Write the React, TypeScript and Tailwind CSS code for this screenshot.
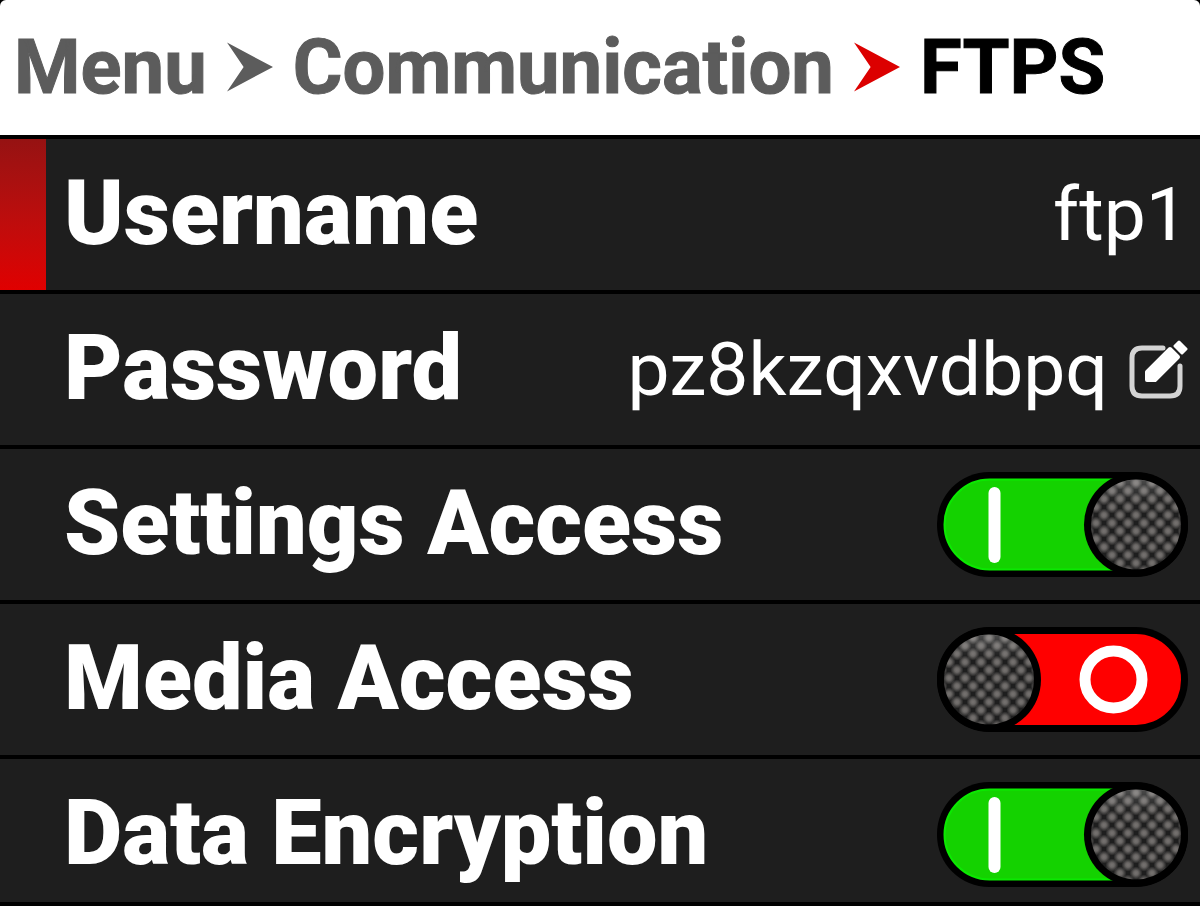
import { useState, type ReactNode } from "react";

const Arrow = ({ className }: { className: string }) => (
  <svg viewBox="0 0 47 50" className={`h-[50px] w-[46px] shrink-0 ${className}`} aria-hidden="true">
    <path d="M0 0 L47 25 L0 50 L17 25 Z" fill="currentColor" />
  </svg>
);

const EditIcon = () => (
  <svg viewBox="0 0 60 62" className="h-[62px] w-[60px]" fill="none" aria-hidden="true">
    <path
      d="M35 9 H14 Q4 9 4 19 V47 Q4 57 14 57 H42 Q52 57 52 47 V27"
      stroke="#d4d4d4"
      strokeWidth="5"
      strokeLinecap="round"
    />
    <path d="M19 41 V33 L42 10 L50 18 L27 41 Z" fill="#fff" stroke="#fff" strokeWidth="4" strokeLinejoin="round" />
    <path d="M47 7 L51 3 L58 10 L54 14 Z" fill="#fff" stroke="#fff" strokeWidth="3" strokeLinejoin="round" />
  </svg>
);

interface ToggleProps {
  id: string;
  checked: boolean;
  onChange: (checked: boolean) => void;
}

const Toggle = ({ id, checked, onChange }: ToggleProps) => {
  const knobX = checked ? 199 : 52;

  return (
    <span className="relative mr-3 block h-[105px] w-[251px] shrink-0">
      <svg viewBox="0 0 251 105" className="h-full w-full" aria-hidden="true">
        <defs>
          <radialGradient id={`${id}-dot`}>
            <stop offset="0" stopColor="#777371" />
            <stop offset="0.35" stopColor="#6a6765" />
            <stop offset="1" stopColor="#6a6765" stopOpacity="0" />
          </radialGradient>
          <pattern id={`${id}-grip`} x={knobX - 8} y="3" width="16" height="16" patternUnits="userSpaceOnUse">
            <rect width="16" height="16" fill="#1e1e1e" />
            <circle cx="8" cy="8" r="6.5" fill={`url(#${id}-dot)`} />
            <circle cx="0" cy="0" r="6.5" fill={`url(#${id}-dot)`} />
            <circle cx="16" cy="0" r="6.5" fill={`url(#${id}-dot)`} />
            <circle cx="0" cy="16" r="6.5" fill={`url(#${id}-dot)`} />
            <circle cx="16" cy="16" r="6.5" fill={`url(#${id}-dot)`} />
          </pattern>
          <linearGradient id={`${id}-shine`} x1="0" y1="0" x2="0" y2="1">
            <stop offset="0" stopColor="#fff" stopOpacity="0.2" />
            <stop offset="0.25" stopColor="#fff" stopOpacity="0" />
          </linearGradient>
        </defs>
        <rect width="251" height="105" rx="52" fill="#000" />
        {checked ? (
          <>
            <rect x="7.5" y="7.5" width="236" height="90" rx="45" fill="#14d200" stroke="#0be900" strokeWidth="2" />
            <rect x="51.5" y="15" width="12" height="76" rx="6" fill="#fff" />
          </>
        ) : (
          <>
            <rect x="7" y="7" width="237" height="91" rx="45" fill="#f00" />
            <circle cx="176.5" cy="52.5" r="28.5" stroke="#fff" strokeWidth="11" fill="none" />
          </>
        )}
        <circle cx={knobX} cy="52.5" r="52" fill="#000" />
        <circle cx={knobX} cy="52.5" r="45" fill={`url(#${id}-grip)`} />
        <circle cx={knobX} cy="52.5" r="45" fill={`url(#${id}-shine)`} />
      </svg>
      <input
        id={id}
        type="checkbox"
        role="switch"
        checked={checked}
        onChange={(e) => onChange(e.target.checked)}
        className="absolute inset-0 h-full w-full cursor-pointer opacity-0"
      />
    </span>
  );
};

interface RowProps {
  label: ReactNode;
  selected?: boolean;
  children: ReactNode;
}

const Row = ({ label, selected, children }: RowProps) => (
  <li className="flex h-[155px] shrink-0 items-stretch border-b-4 border-black bg-[#1e1e1e]">
    <span className={`mr-[18px] w-[46px] shrink-0 ${selected ? "bg-linear-to-b from-[#961212] to-[#e00000]" : ""}`} />
    <div className="flex flex-1 items-center justify-between">
      <span className="pb-0.5 text-[90px] leading-none font-black whitespace-nowrap">{label}</span>
      {children}
    </div>
  </li>
);

const switches = [
  { id: "settings-access", label: "Settings Access", on: true },
  { id: "media-access", label: "Media Access", on: false },
  { id: "data-encryption", label: "Data Encryption", on: true },
];

const App = () => {
  const [state, setState] = useState<Record<string, boolean>>(
    Object.fromEntries(switches.map((s) => [s.id, s.on]))
  );

  return (
    <div className="flex h-screen flex-col bg-black font-['Roboto',sans-serif] text-white">
      <header className="rounded-t-md bg-white px-3.5 pt-[27px] pb-7">
        <nav className="flex items-center gap-5 text-[76px] leading-[80px] font-bold whitespace-nowrap text-[#5c5c5c] [-webkit-text-stroke:1px]">
          <a href="#menu">Menu</a>
          <Arrow className="text-[#5c5c5c]" />
          <a href="#communication">Communication</a>
          <Arrow className="text-[#dc0000]" />
          <span className="text-black">FTPS</span>
        </nav>
      </header>

      <ul className="flex min-h-0 flex-1 flex-col overflow-hidden border-t-4 border-black">
        <Row label="Username" selected>
          <span className="mr-3 text-[75px] leading-none">ftp1</span>
        </Row>
        <Row label="Password">
          <span className="mr-3 flex items-center gap-5">
            <span className="text-[75px] leading-none">pz8kzqxvdbpq</span>
            <button type="button" aria-label="Edit password" className="cursor-pointer">
              <EditIcon />
            </button>
          </span>
        </Row>
        {switches.map((s) => (
          <Row key={s.id} label={<label htmlFor={s.id}>{s.label}</label>}>
            <Toggle
              id={s.id}
              checked={state[s.id]}
              onChange={(checked) => setState({ ...state, [s.id]: checked })}
            />
          </Row>
        ))}
      </ul>
      <footer className="h-1 shrink-0 bg-black" />
    </div>
  );
};

export default App;
